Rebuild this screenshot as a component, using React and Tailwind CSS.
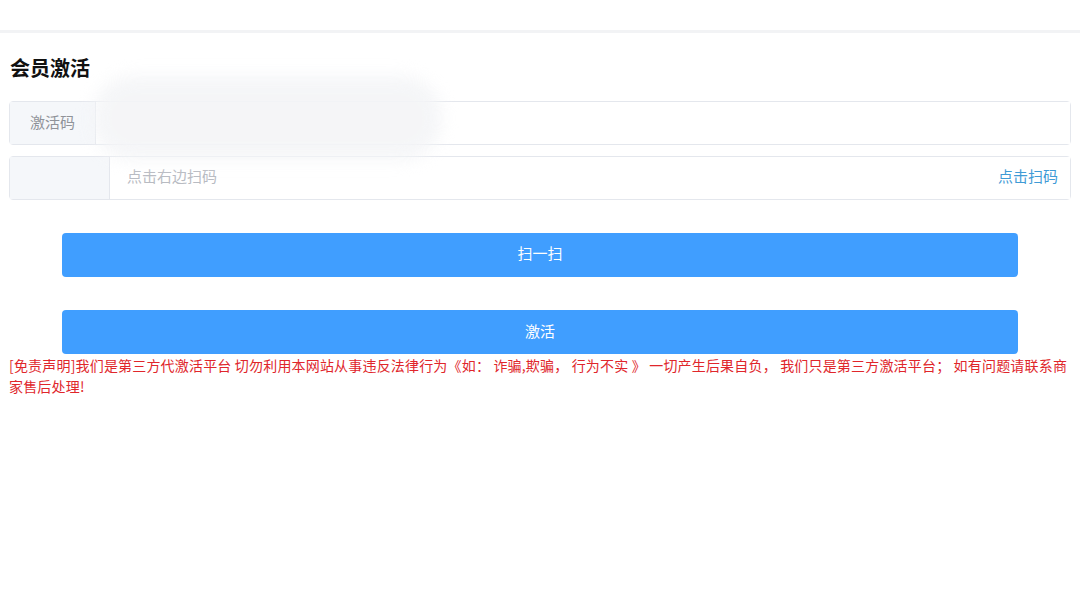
import React from "react";

export default function App() {
  return (
    <div className="relative min-h-[612px] w-[1080px] overflow-hidden bg-white text-[15px] text-[#606266]" style={{ fontFamily: '"Noto Sans CJK SC", "Noto Sans", sans-serif' }}>
      <div className="h-[30px] bg-white" />
      <div className="h-[3px] bg-[#f2f3f5]" />
      <div className="px-[9px]">
        <h1 className="mt-[21px] ml-[1px] text-[20px] font-bold leading-[28px] text-[#111]">会员激活</h1>

        <div className="mt-[19px] flex h-[44px] rounded-[4px] border border-[#e4e7ed]">
          <div className="flex w-[86px] items-center justify-center border-r border-[#e4e7ed] bg-[#f5f7fa] pb-[1px] text-[#909399]">激活码</div>
          <div className="flex-1 bg-white" />
        </div>

        <div className="mt-[11px] flex h-[44px] rounded-[4px] border border-[#e4e7ed]">
          <div className="w-[100px] border-r border-[#e4e7ed] bg-[#f5f7fa]" />
          <div className="flex flex-1 items-center justify-between bg-white pb-[3px] pl-[17px] pr-[12px]">
            <span className="text-[#b8bbc2]">点击右边扫码</span>
            <span className="text-[#3f9bd6]">点击扫码</span>
          </div>
        </div>

        <div className="mx-[53px] mt-[33px] flex h-[44px] items-center justify-center rounded-[4px] bg-[#409eff] pb-[3px] text-white">扫一扫</div>
        <div className="mx-[53px] mt-[33px] flex h-[44px] items-center justify-center rounded-[4px] bg-[#409eff] pb-[1px] text-white">激活</div>

        <p className="mt-[1px] pr-[2px] text-[14px] leading-[21px] tracking-[0.18px] text-[#e0262b]">
          [免责声明]我们是第三方代激活平台 切勿利用本网站从事违反法律行为《如：&nbsp;诈骗,欺骗，&nbsp;行为不实 》 一切产生后果自负，&nbsp;我们只是第三方激活平台；&nbsp;如有问题请联系商家售后处理!
        </p>
      </div>

      <div className="pointer-events-none absolute left-[92px] top-[76px] h-[84px] w-[350px] rounded-[40px] bg-[#f4f5f7] opacity-90 blur-[8px]" />
    </div>
  );
}
